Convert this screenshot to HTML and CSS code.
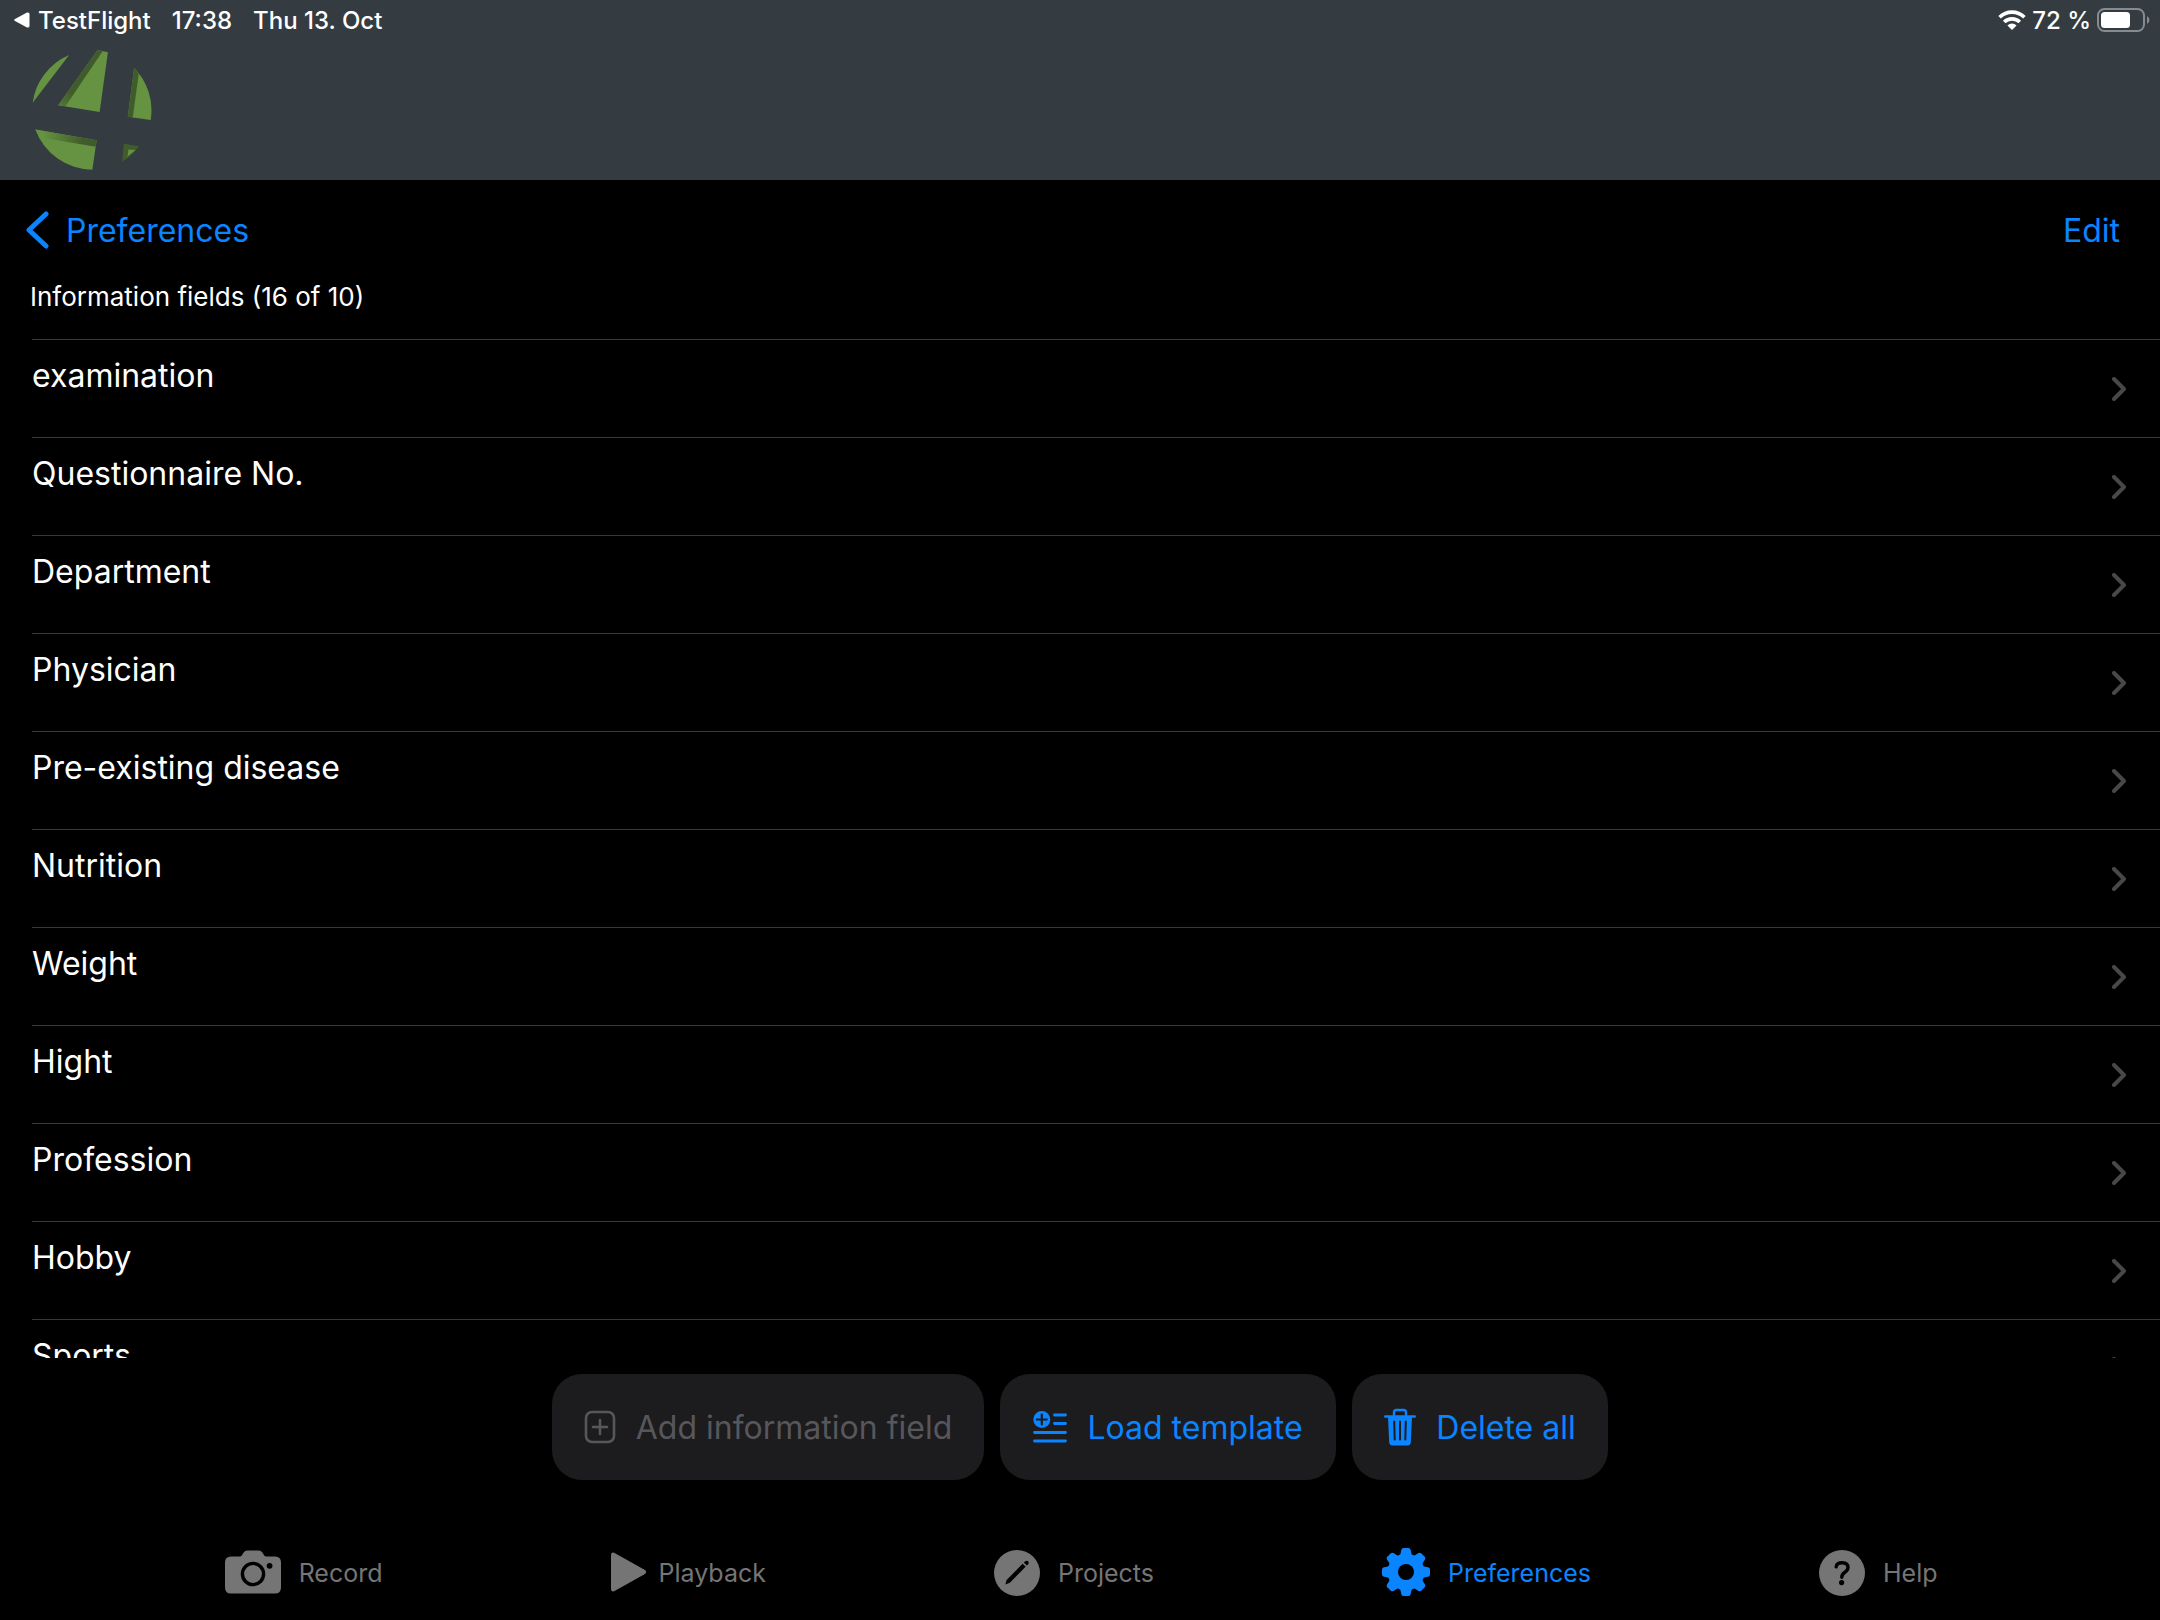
FILE: index.html
```html
<!DOCTYPE html>
<html lang="en">
<head>
<meta charset="utf-8">
<meta name="viewport" content="width=device-width, initial-scale=1">
<title>Information fields</title>
<link rel="stylesheet" href="styles.css">
</head>
<body>
<svg width="0" height="0" class="defs" aria-hidden="true">
  <symbol id="chevron" viewBox="0 0 14 24"><path d="M2 2l10 10L2 22" fill="none" stroke="currentColor" stroke-width="4" stroke-linecap="round" stroke-linejoin="round"/></symbol>
</svg>
<div class="app">
  <header class="banner">
    <div class="status">
      <a class="status-back" href="#"><svg width="16" height="16" viewBox="0 0 16 16"><path d="M1 7L13 .6Q15.500 0 15.500 2V14Q15.500 16 13 15.400L1 9Q-.6 8 1 7Z" fill="currentColor"/></svg>TestFlight</a>
      <span>17:38</span>
      <span>Thu 13. Oct</span>
      <div class="status-right">
        <svg width="28" height="20" viewBox="0 0 28 20"><g fill="none" stroke="currentColor" stroke-width="3.600"><path d="M1.600 7.300a17.500 17.500 0 0 1 24.800 0"/><path d="M6.200 12.100a11 11 0 0 1 15.600 0"/></g><path d="M9.400 15.400a6.500 6.500 0 0 1 9.200 0L14 20Z" fill="currentColor"/></svg>
        <span>72 %</span>
        <svg width="54" height="24" viewBox="0 0 54 24"><rect x="1" y="1" width="46" height="22" rx="6.500" fill="none" stroke="#868b8f" stroke-width="2"/><rect x="4" y="4" width="29" height="16" rx="3.500" fill="currentColor"/><path d="M50 8a4.500 4.500 0 0 1 0 8Z" fill="#868b8f"/></svg>
      </div>
    </div>
    <svg class="logo" viewBox="96 149 362 362" role="img" aria-label="Logo">
      <defs><linearGradient id="shade" x1="130" y1="400" x2="250" y2="420" gradientUnits="userSpaceOnUse"><stop offset="0" stop-color="#659341"/><stop offset="1" stop-color="#415c2b"/></linearGradient>
      <linearGradient id="edge" x1="300" y1="150" x2="186" y2="318" gradientUnits="userSpaceOnUse"><stop offset=".75" stop-color="#415c2b"/><stop offset="1" stop-color="#517635"/></linearGradient></defs>
      <g fill="#659341">
        <path d="M98 308A184 184 0 0 1 208 164Z"/>
        <path d="M294 149L325 156L300 336L175 316Z"/>
        <path d="M404 203A181 181 0 0 1 454 360L385 350Z"/>
        <path d="M106 389L291 421L278 510A186 186 0 0 1 106 389Z"/>
      </g>
      <path d="M294 149L309 153L197 319L175 316Z" fill="url(#edge)"/>
      <path d="M404 203L418 221L400 352L385 350Z" fill="#415c2b"/>
      <path d="M106 389L291 421L288 441L136 415Z" fill="url(#shade)"/>
      <path d="M373 432L419 439Q396 469 368 485Z" fill="#415c2b"/>
      <path d="M387 449L408 451L384 471Z" fill="#659341"/>
    </svg>
  </header>

  <nav class="navbar">
    <a class="back" href="#"><svg width="24" height="38" viewBox="0 0 24 38"><path d="M20 3L3 19L20 35" fill="none" stroke="currentColor" stroke-width="5" stroke-linecap="round" stroke-linejoin="round"/></svg>Preferences</a>
    <button class="edit" type="button">Edit</button>
  </nav>

  <main class="content">
    <h1 class="title">Information fields (16 of 10)</h1>
    <ul class="fields">
      <li><a href="#">examination<svg class="chev"><use href="#chevron"/></svg></a></li>
      <li><a href="#">Questionnaire No.<svg class="chev"><use href="#chevron"/></svg></a></li>
      <li><a href="#">Department<svg class="chev"><use href="#chevron"/></svg></a></li>
      <li><a href="#">Physician<svg class="chev"><use href="#chevron"/></svg></a></li>
      <li><a href="#">Pre-existing disease<svg class="chev"><use href="#chevron"/></svg></a></li>
      <li><a href="#">Nutrition<svg class="chev"><use href="#chevron"/></svg></a></li>
      <li><a href="#">Weight<svg class="chev"><use href="#chevron"/></svg></a></li>
      <li><a href="#">Hight<svg class="chev"><use href="#chevron"/></svg></a></li>
      <li><a href="#">Profession<svg class="chev"><use href="#chevron"/></svg></a></li>
      <li><a href="#">Hobby<svg class="chev"><use href="#chevron"/></svg></a></li>
      <li><a href="#">Sports<svg class="chev"><use href="#chevron"/></svg></a></li>
    </ul>
  </main>

  <div class="actions">
    <button class="large" type="button" disabled><svg width="32" height="38" viewBox="0 0 32 38"><g fill="none" stroke="currentColor" stroke-linecap="round"><rect x="2" y="4" width="28" height="30" rx="6" stroke-width="2.600"/><path d="M16 12v14M9 19h14" stroke-width="2.600"/></g></svg>Add information field</button>
    <button class="medium" type="button"><svg width="34" height="38" viewBox="0 0 34 38"><g stroke="currentColor" stroke-width="2.800" stroke-linecap="round"><path d="M21.500 7H32.500M21.500 15.500H32.500M1.500 24.500H32.500M1.500 33H32.500"/></g><circle cx="8.800" cy="11.500" r="8.500" fill="currentColor"/><path d="M8.800 6.500v10M3.800 11.500h10" stroke="#1c1c1e" stroke-width="2.200" stroke-linecap="round"/></svg>Load template</button>
    <button class="small" type="button"><svg width="32" height="38" viewBox="0 0 32 38"><path d="M10 8V4.500Q10 2 12.500 2H19.500Q22 2 22 4.500V8" fill="none" stroke="currentColor" stroke-width="2.400"/><path d="M1.200 8.500H30.800" stroke="currentColor" stroke-width="2.400" stroke-linecap="round"/><path d="M4 9H28L26.800 34Q26.600 37.500 23.500 37.500H8.500Q5.400 37.500 5.200 34Z" fill="currentColor"/><path d="M10.200 13.500L10.700 31.500M16 13.500V31.500M21.800 13.500L21.300 31.500" stroke="#1c1c1e" stroke-width="2" stroke-linecap="round"/></svg>Delete all</button>
  </div>

  <nav class="tabs">
    <a href="#"><svg width="56" height="48" viewBox="0 0 56 48"><path d="M6 8.500H15Q17 8 18 5.500Q19.500 2.500 22.500 2.500H33.500Q36.500 2.500 38 5.500Q39 8 41 8.500H50Q56 8.500 56 14.500V39.500Q56 45.500 50 45.500H6Q0 45.500 0 39.500V14.500Q0 8.500 6 8.500Z" fill="currentColor"/><circle cx="28" cy="26" r="10.600" fill="none" stroke="#000" stroke-width="3.400"/><circle cx="44.600" cy="17.800" r="2.900"/></svg>Record</a>
    <a class="tight" href="#"><svg width="36" height="48" viewBox="0 0 36 48"><path d="M0 7.500Q0 3 4.500 5.500L33.500 21.800Q37 24 33.500 26.200L4.500 42.500Q0 45 0 40.500Z" fill="currentColor"/></svg>Playback</a>
    <a href="#"><svg width="46" height="48" viewBox="0 0 46 48"><circle cx="23" cy="25" r="23" fill="currentColor"/><path d="M28.600 15.800L31.600 18.800L15.800 34.800L11.400 36.600L12.600 32Z"/><path d="M29.800 14.600L31 13.400Q33 12.200 34.300 13.500Q35.400 15 34 16.600L32.800 17.600Z"/></svg>Projects</a>
    <a class="active" href="#" aria-current="page"><svg width="48" height="48" viewBox="-24 -24 48 48"><g fill="currentColor"><circle r="18.500"/><g id="teeth"><path id="tooth" d="M-7 -15Q-5.500 -17 -5 -20.500Q-4.600 -24 -2.500 -24H2.500Q4.600 -24 5 -20.500Q5.500 -17 7 -15Z"/><use href="#tooth" transform="rotate(45)"/><use href="#tooth" transform="rotate(90)"/><use href="#tooth" transform="rotate(135)"/></g><use href="#teeth" transform="rotate(180)"/></g><circle r="8" fill="#000"/></svg>Preferences</a>
    <a href="#"><svg width="46" height="48" viewBox="0 0 46 48"><circle cx="23" cy="25" r="23" fill="currentColor"/><path d="M17.200 18.800Q17.600 14.800 23.200 14.800Q29 14.800 29 19.600Q29 22.400 25.600 24.500Q22.800 26.400 22.800 29.200" fill="none" stroke="#000" stroke-width="3.400" stroke-linecap="round"/><circle cx="22.600" cy="34.600" r="2.600"/></svg>Help</a>
  </nav>
</div>
</body>
</html>
```
FILE: styles.css
```css
* { box-sizing: border-box; }

body {
  margin: 0;
  background: #000;
  color: #fff;
  font-family: Inter, "Liberation Sans", sans-serif;
  font-size: 32px;
}

a { color: inherit; text-decoration: none; }
button { font: inherit; color: inherit; background: none; border: 0; padding: 0; }
svg { display: block; flex: none; }
.defs { position: absolute; }

.app {
  display: flex;
  flex-direction: column;
  height: 100vh;
  overflow: hidden;
}

.banner {
  flex: none;
  height: 180px;
  background: #343c42;
}

.status {
  display: flex;
  align-items: center;
  gap: 21px;
  height: 40px;
  padding: 0 9px 0 14px;
  font-size: 24px;
  font-weight: 500;
}
.status-back { display: flex; align-items: center; gap: 8px; }
.status-right { display: flex; align-items: center; gap: 6px; margin-left: auto; }

.logo { width: 120px; height: 120px; margin: 10px 0 0 32px; }

.navbar {
  flex: none;
  display: flex;
  align-items: center;
  justify-content: space-between;
  height: 100px;
  padding: 0 40px 0 26px;
  color: #0a84ff;
}
.back { display: flex; align-items: center; gap: 16px; }

.content { flex: 1; min-height: 0; overflow: hidden; }
.title {
  margin: 0;
  padding: 0 30px;
  height: 59px;
  line-height: 34px;
  font-size: 26px;
  font-weight: 400;
}

.fields { list-style: none; margin: 0; padding: 0 0 0 32px; }
.fields a {
  display: flex;
  justify-content: space-between;
  height: 98px;
  padding: 16px 34px 0 0;
  border-top: 1px solid #38383a;
  line-height: 40px;
}
.chev { width: 14px; height: 24px; margin-top: 21px; color: #48484a; }

.actions {
  flex: none;
  display: flex;
  justify-content: center;
  gap: 16px;
  padding: 16px 0;
  color: #0a84ff;
}
.actions button {
  display: flex;
  align-items: center;
  justify-content: center;
  gap: 20px;
  height: 106px;
  padding: 0 28px;
  border-radius: 30px;
  background: #1c1c1e;
}
.actions .large { min-width: 432px; }
.actions .medium { min-width: 336px; }
.actions .small { min-width: 256px; }
.actions button:disabled { color: #57575b; }

.tabs {
  flex: none;
  display: flex;
  justify-content: space-between;
  height: 124px;
  padding: 52px 10.3% 0 10.4%;
  font-size: 25px;
  line-height: 50px;
  color: #757575;
}
.tabs a { display: flex; gap: 18px; height: 48px; }
.tabs .tight { gap: 12px; }
.tabs .active { color: #0a84ff; }
```
